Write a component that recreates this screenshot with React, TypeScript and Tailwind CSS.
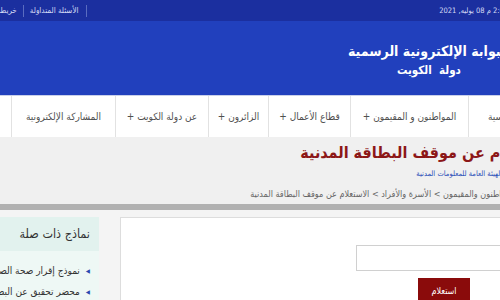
import React from "react";

const kufi = { fontFamily: '"DejaVu Sans Condensed", "DejaVu Sans", sans-serif' };

export default function App() {
  const nav = [
    { t: "الرئيسية", w: "w-[70px]" },
    { t: "المواطنون و المقيمون +", w: "w-[118px]" },
    { t: "قطاع الأعمال +", w: "w-[82px]" },
    { t: "الزائرون +", w: "w-[60px]" },
    { t: "عن دولة الكويت +", w: "w-[93px]" },
    { t: "المشاركة الإلكترونية", w: "w-[104px]" },
  ];
  return (
    <div className="w-[500px] h-[300px] overflow-hidden bg-[#f4f4f4]">
      <div dir="rtl" className="w-[600px] ml-[-45px] font-['DejaVu_Sans_Condensed','DejaVu_Sans',sans-serif]">
        {/* top bar */}
        <div className="h-[21px] bg-[#1b2f9f] flex items-center justify-between pr-[36px] pl-[20px] text-[7.5px] text-[#d6dcf5]">
          <span className="whitespace-nowrap">2:07:41 م 08 يوليه, 2021</span>
          <div className="flex items-center text-[8px]">
            <span className="border-r border-[#5a6cc0] pr-[7px] pl-[6px] whitespace-nowrap">الأسئلة المتداولة</span>
            <span className="border-r border-[#5a6cc0] pr-[6px] whitespace-nowrap">خريطة الموقع</span>
          </div>
        </div>
        {/* header */}
        <div className="h-[75px] bg-[#2140bd] border-b border-[#c9d0ea] flex justify-start pr-[45px] pt-[20px]">
          <div className="flex flex-col items-center text-white font-bold" style={kufi}>
            <div className="text-[14px] leading-[20px] whitespace-nowrap">البوابة الإلكترونية الرسمية</div>
            <div className="text-[11.5px] leading-[16px] mt-[1px] whitespace-nowrap">دولة&nbsp;&nbsp;الكويت</div>
          </div>
        </div>
        {/* nav */}
        <div className="h-[41px] bg-white flex pr-[17px]">
          {nav.map((n) => (
            <div
              key={n.t}
              className={`${n.w} shrink-0 border-l border-[#e2e2e2] flex items-center justify-center text-[10px] text-[#505050] whitespace-nowrap`}
              style={kufi}
            >
              {n.t}
            </div>
          ))}
        </div>
        {/* title area */}
        <div className="h-[67px] bg-[#f0f0f0] pt-[4px]">
          <div className="text-[16px] leading-[24px] font-bold text-[#8c1717] whitespace-nowrap" style={kufi}>
            الاستعلام عن موقف البطاقة المدنية
          </div>
          <div className="text-[7.5px] leading-[12px] mt-[3px] pr-[5px] text-[#2b4fb8] whitespace-nowrap">
            خدمة مقدمة من الهيئة العامة للمعلومات المدنية
          </div>
          <div className="text-[9px] leading-[14px] mt-[7px] text-[#666] whitespace-nowrap">
            الرئيسية &gt; المواطنون والمقيمون &gt; الأسرة والأفراد &gt; الاستعلام عن موقف البطاقة المدنية
          </div>
        </div>
        <div className="h-[6px] bg-[#b1b1b1]" />
        {/* main */}
        <div className="flex gap-[21px] pt-[7px] pr-[15px] pl-[15px] h-[100px]">
          <div className="w-[420px] shrink-0 bg-white border border-[#dddddd]" dir="ltr">
            <div className="ml-[235px] mt-[27px] w-[220px] h-[26px] border border-[#d0d0d0] bg-white" />
            <div className="ml-[297px] mt-[7px] w-[52px] h-[28px] bg-[#8a0b0b] flex items-center justify-center text-white text-[9px]" dir="rtl">
              استعلام
            </div>
          </div>
          <div className="w-[129px] shrink-0 bg-[#eef8f5]">
            <div className="h-[34px] bg-[#e2f2ee] flex items-center pr-[9px] text-[12.5px] text-[#333] whitespace-nowrap" style={kufi}>
              نماذج ذات صلة
            </div>
            <div className="pt-[9px] pr-[9px] text-[10px] text-[#333]">
              <div className="h-[21px] flex items-center whitespace-nowrap">
                <span className="text-[#2848b0] text-[6px] ml-[6px]">◀</span>
                نموذج إقرار صحة الصورة
              </div>
              <div className="h-[21px] flex items-center whitespace-nowrap">
                <span className="text-[#2848b0] text-[6px] ml-[6px]">◀</span>
                محضر تحقيق عن البطاقة المفقودة
              </div>
            </div>
          </div>
        </div>
      </div>
    </div>
  );
}
